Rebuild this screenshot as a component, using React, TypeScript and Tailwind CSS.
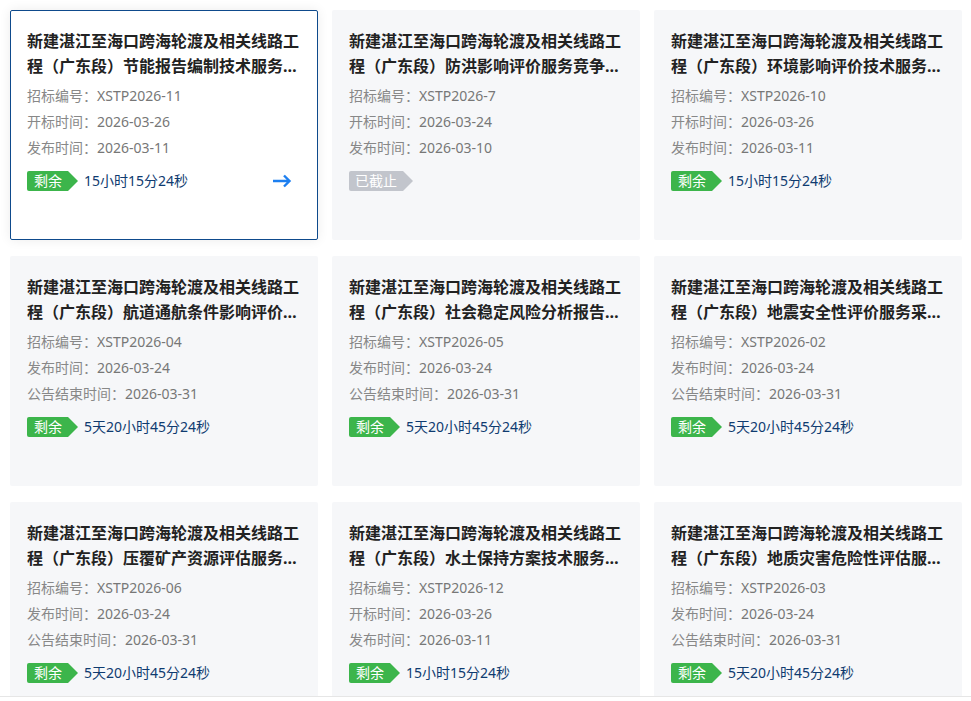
import React from 'react';

interface Bid {
  title: string;
  code: string;
  rows: [string, string][];
  remain?: string;
  expired?: boolean;
  active?: boolean;
}

const PREFIX = '新建湛江至海口跨海轮渡及相关线路工程（广东段）';

const bids: Bid[] = [
  {
    title: PREFIX + '节能报告编制技术服务采购项目',
    code: 'XSTP2026-11',
    rows: [['开标时间', '2026-03-26'], ['发布时间', '2026-03-11']],
    remain: '15小时15分24秒',
    active: true,
  },
  {
    title: PREFIX + '防洪影响评价服务竞争性磋商采购项目',
    code: 'XSTP2026-7',
    rows: [['开标时间', '2026-03-24'], ['发布时间', '2026-03-10']],
    expired: true,
  },
  {
    title: PREFIX + '环境影响评价技术服务采购项目',
    code: 'XSTP2026-10',
    rows: [['开标时间', '2026-03-26'], ['发布时间', '2026-03-11']],
    remain: '15小时15分24秒',
  },
  {
    title: PREFIX + '航道通航条件影响评价服务采购项目',
    code: 'XSTP2026-04',
    rows: [['发布时间', '2026-03-24'], ['公告结束时间', '2026-03-31']],
    remain: '5天20小时45分24秒',
  },
  {
    title: PREFIX + '社会稳定风险分析报告编制服务采购项目',
    code: 'XSTP2026-05',
    rows: [['发布时间', '2026-03-24'], ['公告结束时间', '2026-03-31']],
    remain: '5天20小时45分24秒',
  },
  {
    title: PREFIX + '地震安全性评价服务采购项目',
    code: 'XSTP2026-02',
    rows: [['发布时间', '2026-03-24'], ['公告结束时间', '2026-03-31']],
    remain: '5天20小时45分24秒',
  },
  {
    title: PREFIX + '压覆矿产资源评估服务采购项目',
    code: 'XSTP2026-06',
    rows: [['发布时间', '2026-03-24'], ['公告结束时间', '2026-03-31']],
    remain: '5天20小时45分24秒',
  },
  {
    title: PREFIX + '水土保持方案技术服务采购项目',
    code: 'XSTP2026-12',
    rows: [['开标时间', '2026-03-26'], ['发布时间', '2026-03-11']],
    remain: '15小时15分24秒',
  },
  {
    title: PREFIX + '地质灾害危险性评估服务采购项目',
    code: 'XSTP2026-03',
    rows: [['发布时间', '2026-03-24'], ['公告结束时间', '2026-03-31']],
    remain: '5天20小时45分24秒',
  },
];

const tagShape =
  '[clip-path:polygon(0_0,calc(100%-10px)_0,100%_50%,calc(100%-10px)_100%,0_100%)]';

// flat blue arrow shown on the hovered card
const GoArrow = () => (
  <svg width="20" height="14" viewBox="0 0 20 14" className="ml-auto mr-[9px]" fill="none">
    <path
      d="M1 7h16M12 1.5L17.5 7 12 12.5"
      stroke="#1d7ff0"
      strokeWidth="2.4"
      strokeLinecap="butt"
      strokeLinejoin="miter"
    />
  </svg>
);

const BidCard: React.FC<{ bid: Bid }> = ({ bid }) => {
  const all: [string, string][] = [['招标编号', bid.code], ...bid.rows];
  return (
    <div
      className={`h-[230px] rounded-[2px] px-[16px] pt-[18px] ${
        bid.active
          ? 'border border-[#0e4a8c] bg-white shadow-[0_0_12px_rgba(0,0,0,0.08)]'
          : 'border border-transparent bg-[#f6f7f9]'
      }`}
    >
      <div className="line-clamp-2 text-[16px] font-bold leading-[25px] text-[#222]">
        {bid.title}
      </div>
      <div className="mt-[4px] text-[14px] leading-[26px]">
        {all.map(([k, v]) => (
          <div key={k} className="text-[#888]">
            {k}：<span className="text-[#777]">{v}</span>
          </div>
        ))}
      </div>
      <div className="mt-[10px] flex h-[20px] items-center">
        {bid.expired ? (
          <span
            className={`h-[20px] rounded-l-[2px] bg-[#c2c5cc] pl-[6px] pr-[16px] text-[14px] leading-[20px] text-white ${tagShape}`}
          >
            已截止
          </span>
        ) : (
          <>
            <span
              className={`h-[20px] rounded-l-[2px] bg-[#3cb54b] pl-[7px] pr-[16px] text-[14px] leading-[20px] text-white ${tagShape}`}
            >
              剩余
            </span>
            <span className="ml-[6px] text-[14px] leading-[20px] text-[#0f3b70]">
              {bid.remain}
            </span>
            {bid.active && <GoArrow />}
          </>
        )}
      </div>
    </div>
  );
};

export default function App() {
  return (
    <div className="min-h-screen bg-white font-['Noto_Sans','Noto_Sans_CJK_SC',sans-serif]">
      <div className="grid grid-cols-[308px_308px_308px] gap-x-[14px] gap-y-[16px] pl-[10px] pt-[10px]">
        {bids.map((b) => (
          <BidCard key={b.code} bid={b} />
        ))}
      </div>
      <div className="fixed bottom-0 left-0 right-0 h-[5px] border-t border-[#e6e6e6] bg-white" />
    </div>
  );
}
